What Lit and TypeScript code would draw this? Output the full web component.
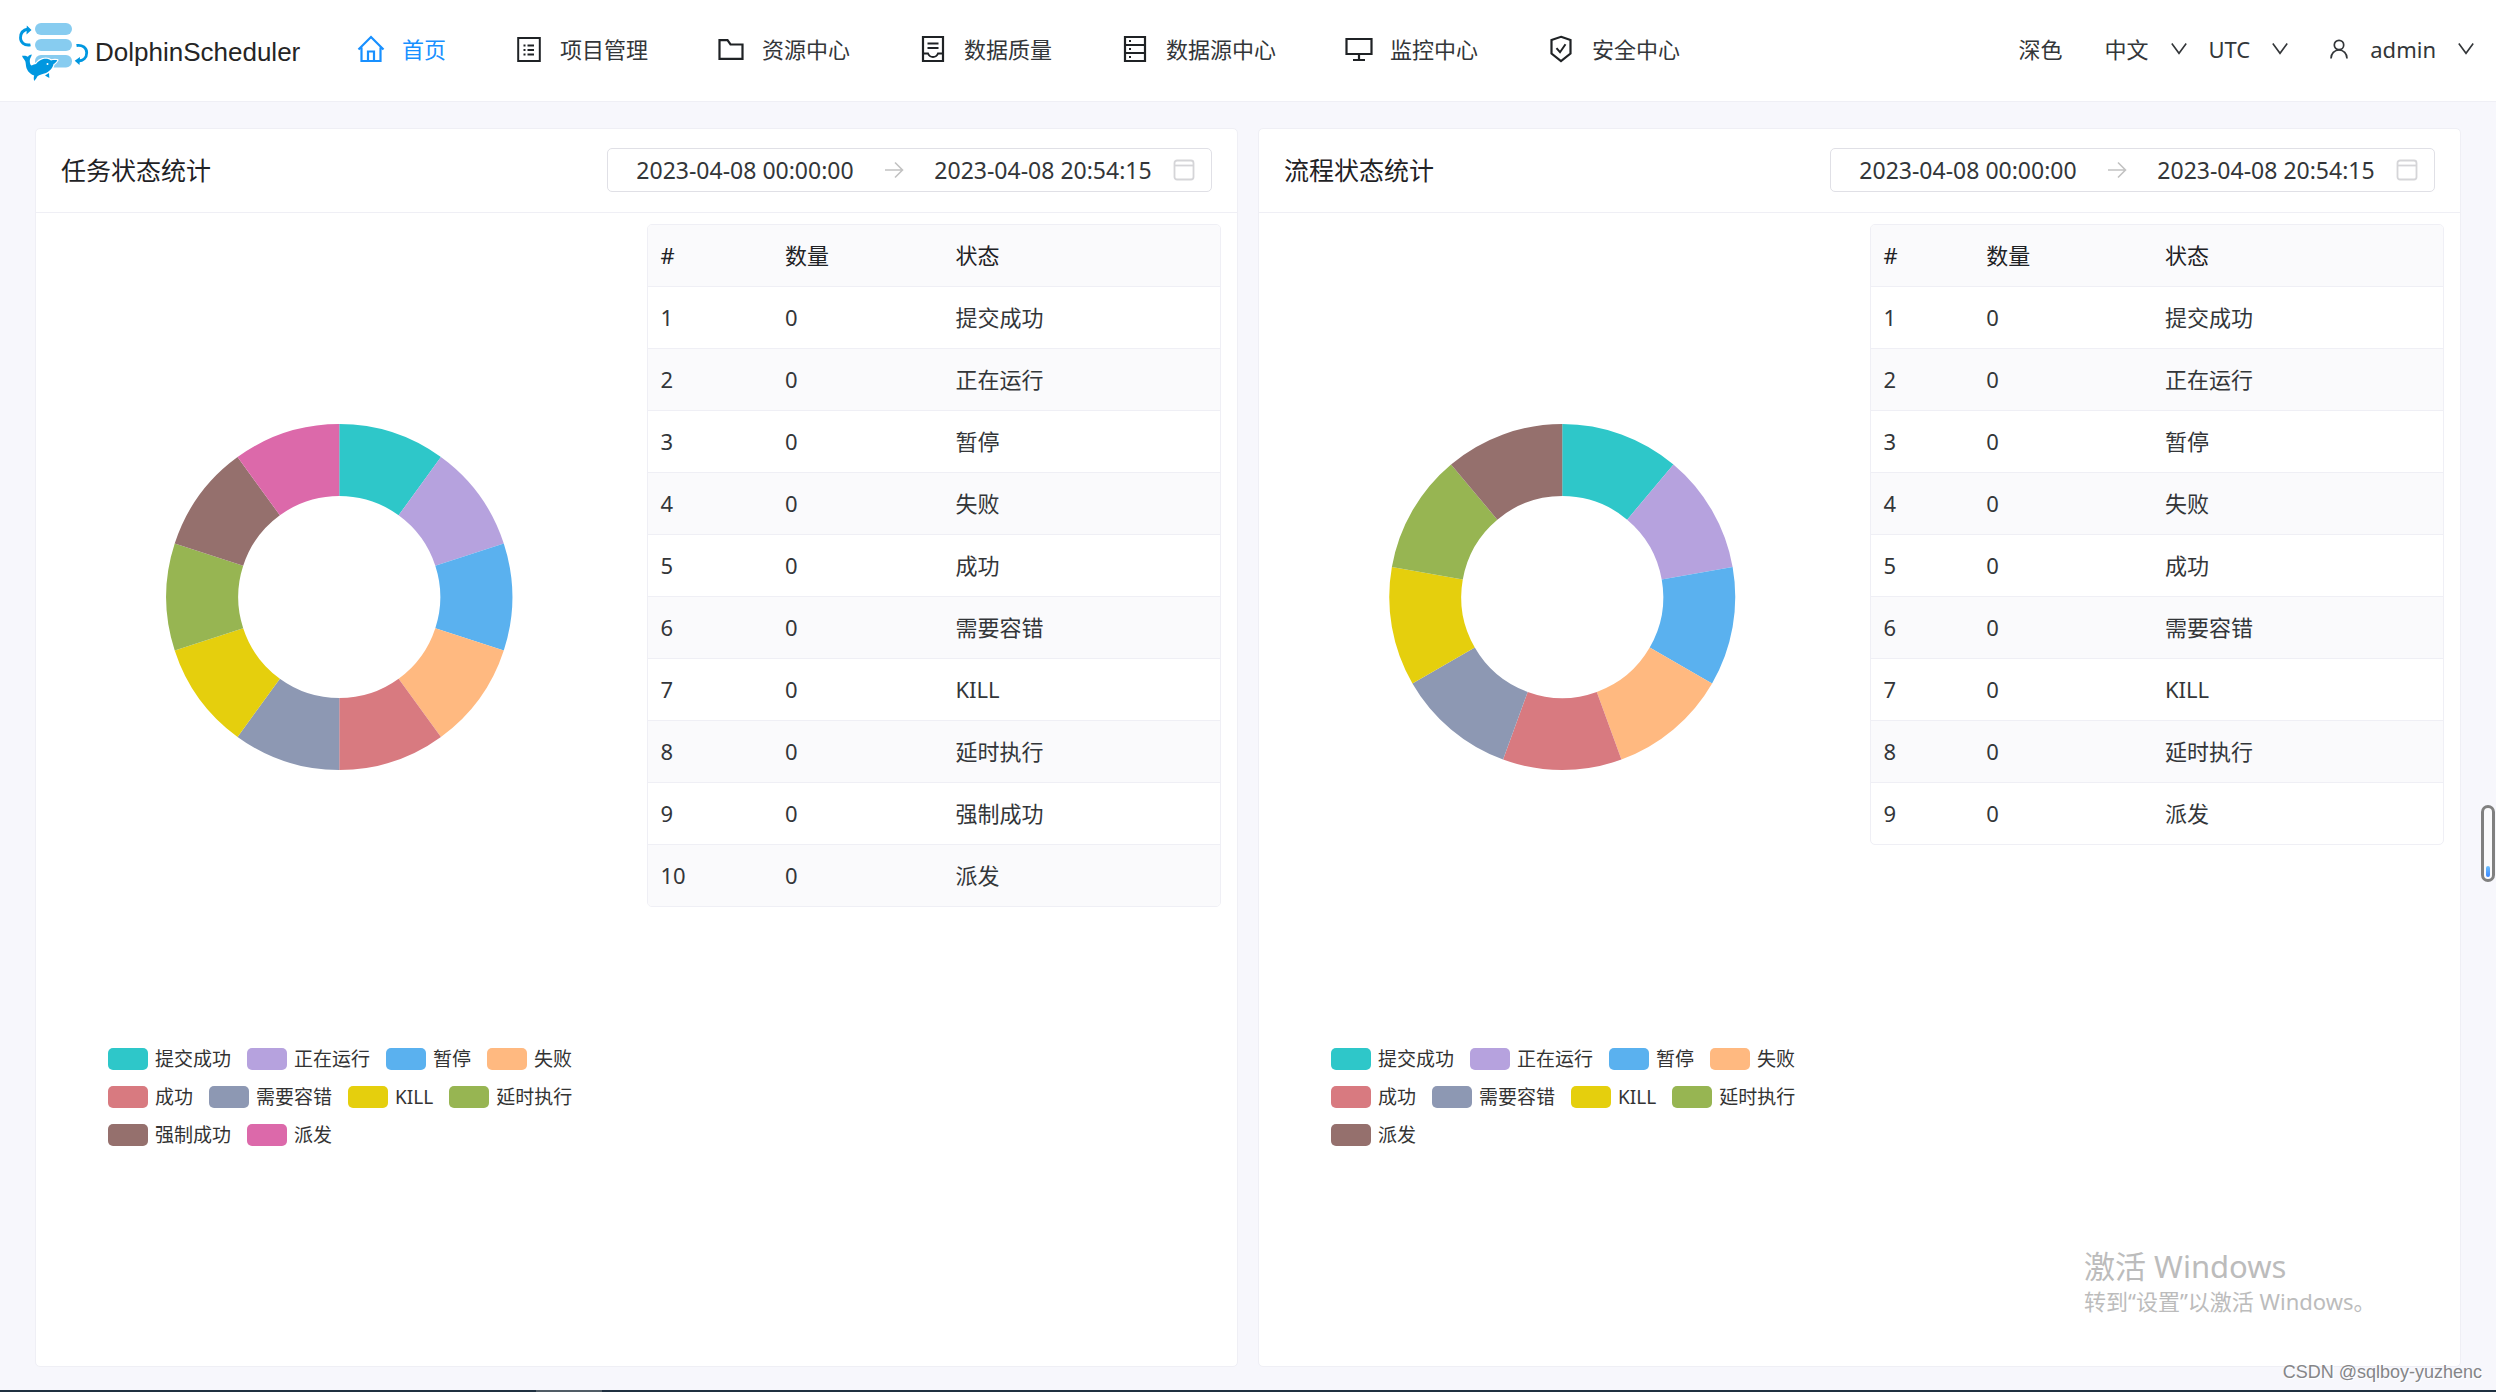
import { LitElement, html, css, svg } from "lit";
import { customElement, property } from "lit/decorators.js";

const base = css`
  * { box-sizing: border-box; }
  button, input { font: inherit; color: inherit; background: none; border: 0; padding: 0; margin: 0; }
  button { cursor: pointer; }
  svg { display: block; flex: none; }
`;

const COLORS = ["#2ec7c9", "#b6a2de", "#5ab1ef", "#ffb980", "#d87a80", "#8d98b3", "#e5cf0d", "#97b552", "#95706d", "#dc69aa"];

interface NavItem { label: string; icon: unknown; }

const NAV: NavItem[] = [
  { label: "首页", icon: svg`<path d="M2.5 15.500 15 3l12.500 12.500M5.500 13.500v13.500h19V13.500M12 27v-9.500h6V27"/>` },
  { label: "项目管理", icon: svg`<path d="M3 4h24v23H3z" transform="translate(1.500 0) scale(.9 1)"/><path d="M9.500 11.500h2M9.500 16h2M9.500 20.500h2M13.500 11.500h6.500M13.500 16h6.500M13.500 20.500h6.500" stroke-width="2"/>` },
  { label: "资源中心", icon: svg`<path d="M3.500 6.200h8l3 4.300h12v14.300h-23z"/>` },
  { label: "数据质量", icon: svg`<path d="M5 3h20v24H5z"/><path d="M9.500 9.500h11M9.500 14h11" stroke-width="2"/><path d="M5 19.500h5c1 2.500 2.500 3.500 5 3.500s4-1 5-3.500h5" stroke-width="2"/>` },
  { label: "数据源中心", icon: svg`<path d="M5 3h20v24H5zM5 11h20M5 19h20"/><path d="M9 7h2M9 15h2M9 23h2" stroke-width="2"/>` },
  { label: "监控中心", icon: svg`<path d="M2.500 5h25v15h-25zM15 20v5M9 26h12"/>` },
  { label: "安全中心", icon: svg`<path d="M15 2.800 24.500 6v13.500L15 27 5.500 19.500V6z"/><path d="m10.500 14.200 3.500 4 5.500-8" stroke-width="2"/>` },
];

const chevron = html`<svg width="16" height="16" viewBox="0 0 16 16" fill="none" stroke="currentColor" stroke-width="1.6" aria-hidden="true"><path d="M.8 2.500 8 12.300 15.200 2.500"/></svg>`;

@customElement("top-bar")
class TopBar extends LitElement {
  static styles = [base, css`
    :host { display: block; }
    .bar { display: flex; align-items: center; height: 102px; padding: 0 22px 0 18px; background: #fff; border-bottom: 1px solid #efeff5; color: #333639; }
    .logo { display: flex; align-items: center; width: 338px; padding-top: 2px; color: #252525; font-family: "Liberation Sans", sans-serif; font-size: 26px; gap: 5px; text-decoration: none; }
    .nav { display: flex; gap: 68px; margin-bottom: 3px; }
    .link { display: flex; align-items: center; gap: 16px; color: inherit; text-decoration: none; white-space: nowrap; }
    .link svg { color: #1f2225; }
    .link.active, .link.active svg { color: #1890ff; }
    .tools { display: flex; align-items: center; margin: 0 0 3px auto; white-space: nowrap; }
    .tool { display: flex; align-items: center; gap: 22px; margin-left: 22px; }
    .tool.far { margin-left: 42px; }
  `];
  render() {
    return html`<header class="bar">
      <a class="logo" href="#home">
        <svg width="72" height="60" viewBox="18 21 72 60" aria-hidden="true">
          <g fill="#87ccf0">
            <rect x="35" y="22" width="37" height="12" rx="6"/>
            <rect x="35" y="38" width="37" height="12" rx="6"/>
            <rect x="35" y="54" width="37" height="12.500" rx="6"/>
          </g>
          <g fill="none" stroke="#0097e0" stroke-width="2.800">
            <path d="M30.500 43.800C24 45 20.500 41 20.500 36.800c0-5.500 3-8 7.500-8.800"/>
            <path d="M76.500 44.500c6-1 10.200 2.500 10.200 7.300 0 5-3.500 7.900-8.500 8.200"/>
          </g>
          <path fill="#0097e0" d="M26.800 24.500 31.500 29l-5 4.500zM80 56l-5.300 3.800L79.500 64z"/>
          <path fill="#0097e0" stroke="#fff" stroke-width="2.400" stroke-linejoin="round" paint-order="stroke" d="M22 54.800c2.600-.4 4.600 0 6 1 .8-1.300 2-2 3.800-2.200-.3 2.200-1.600 3.400-2 5.400-.2 3 .6 5 1.700 5.600 1.800-1 3.200-1.400 4.500-1.600 2-2.600 4.200-4.200 6.500-4.800 3.500-.8 6.500-.3 8.500 1.200 2.300-.4 4.300-.4 6.300-.2-.9 1.700-2.300 3-3.800 3.900-.6 3.900-3.600 7.200-7.500 8.900-3.500 1.200-6.500 1.700-8.500 3.200-1 1.800-1.800 3.200-3.300 4.700-.6-2-.6-3.700 0-5.400-4-1.200-7-4.500-8-8.500-.5-2.500-.3-4-1-6-1-2-2.600-2.800-3.200-5.200z"/>
          <path fill="#0097e0" d="m45 74.500 4-2.500.3 5z"/>
          <circle cx="47.500" cy="63" r="1" fill="#fff"/>
        </svg>
        <span>DolphinScheduler</span>
      </a>
      <nav class="nav">
        ${NAV.map((n, i) => html`<a class="link ${i === 0 ? "active" : ""}" href="#nav-${i}">
          <svg width="30" height="30" viewBox="0 0 30 30" fill="none" stroke="currentColor" stroke-width="2.200" aria-hidden="true">${n.icon}</svg>
          <span>${n.label}</span></a>`)}
      </nav>
      <div class="tools">
        <button class="tool">深色</button>
        <button class="tool far">中文 ${chevron}</button>
        <button class="tool">UTC ${chevron}</button>
        <button class="tool far">
          <svg width="18" height="20" viewBox="0 0 18 20" fill="none" stroke="currentColor" stroke-width="1.700" aria-hidden="true"><circle cx="9" cy="6" r="4.700"/><path d="M1 19.500c0-5 3.500-8.500 8-8.500s8 3.500 8 8.500"/></svg>
          admin ${chevron}
        </button>
      </div>
    </header>`;
  }
}

@customElement("date-range")
class DateRange extends LitElement {
  static styles = [base, css`
    :host { display: block; width: 605px; max-width: 100%; }
    .box { display: flex; align-items: center; height: 44px; padding: 0 16px 0 12px; border: 1px solid #e0e0e6; border-radius: 5px; background: #fff; font-size: 23px; color: #333639; }
    input { flex: 1; min-width: 0; width: 0; height: 40px; text-align: center; outline: none; }
    .arrow { margin: 0 14px; color: #c2c2c2; }
    .cal { display: flex; margin-left: 5px; color: #d5d5d8; }
  `];
  render() {
    return html`<div class="box">
      <input type="text" aria-label="开始时间" .value=${"2023-04-08 00:00:00"}>
      <svg class="arrow" width="20" height="20" viewBox="0 0 20 20" fill="none" stroke="currentColor" stroke-width="1.600" aria-hidden="true"><path d="M1 10h17M11 2.500 18.500 10 11 17.500"/></svg>
      <input type="text" aria-label="结束时间" .value=${"2023-04-08 20:54:15"}>
      <button class="cal" aria-label="选择日期"><svg width="22" height="22" viewBox="0 0 22 22" fill="none" stroke="currentColor" stroke-width="1.800" aria-hidden="true"><rect x="1.500" y="1.500" width="19" height="19" rx="2.500"/><path d="M1.500 6.500h19"/></svg></button>
    </div>`;
  }
}

@customElement("status-card")
class StatusCard extends LitElement {
  @property() heading = "";
  @property({ attribute: false }) states: string[] = [];

  static styles = [base, css`
    :host { display: flex; min-width: 0; }
    .card { flex: 1; min-width: 0; background: #fff; border: 1px solid #efeff5; border-radius: 5px; }
    .head { display: flex; align-items: center; justify-content: space-between; gap: 20px; padding: 19px 25px 20px; border-bottom: 1px solid #efeff5; }
    .title { margin: 0; font-size: 25px; line-height: 40px; font-weight: 400; color: #1f2225; white-space: nowrap; }
    .body { display: grid; grid-template-columns: 1fr 1fr; align-items: start; gap: 20px; padding: 11px 16px; }
    .chart { display: flex; flex-direction: column; }
    .pie { width: 100%; height: 746px; }
    .legend { display: flex; flex-wrap: wrap; gap: 8px 16px; width: 480px; margin: 74px 0 0 56px; padding: 0; list-style: none; font-size: 19px; line-height: 30px; color: #333; }
    .item { display: flex; align-items: center; gap: 7px; }
    .swatch { width: 40px; height: 22px; border-radius: 5px; }
    table { width: 100%; border: 1px solid #efeff5; border-radius: 5px; border-spacing: 0; overflow: hidden; color: #333639; }
    th, td { height: 62px; padding: 0 13px 2px; text-align: left; font-weight: 400; line-height: 30px; border-bottom: 1px solid #efeff5; white-space: nowrap; }
    th { color: #1f2225; background: #fafafc; }
    tbody tr:nth-child(even) td { background: #fafafc; }
    tbody tr:last-child td { height: 61px; border-bottom: 0; }
  `];

  private slice(i: number, n: number) {
    const R = 173, r = 101;
    const a = (i / n) * 2 * Math.PI, b = ((i + 1) / n) * 2 * Math.PI;
    const p = (rad: number, t: number) => `${(rad * Math.sin(t)).toFixed(2)} ${(-rad * Math.cos(t)).toFixed(2)}`;
    return svg`<path fill=${COLORS[i]} d="M${p(R, a)}A${R} ${R} 0 0 1 ${p(R, b)}L${p(r, b)}A${r} ${r} 0 0 0 ${p(r, a)}Z"/>`;
  }

  render() {
    const n = this.states.length;
    return html`<section class="card">
      <div class="head"><h2 class="title">${this.heading}</h2><date-range></date-range></div>
      <div class="body">
        <div class="chart">
          <svg class="pie" viewBox="-287 -373 574 746" role="img" aria-label=${this.heading}>${this.states.map((_, i) => this.slice(i, n))}</svg>
          <ul class="legend">
            ${this.states.map((s, i) => html`<li class="item"><span class="swatch" style="background:${COLORS[i]}"></span>${s}</li>`)}
          </ul>
        </div>
        <table>
          <thead><tr><th>#</th><th>数量</th><th>状态</th></tr></thead>
          <tbody>${this.states.map((s, i) => html`<tr><td>${i + 1}</td><td>0</td><td>${s}</td></tr>`)}</tbody>
        </table>
      </div>
    </section>`;
  }
}

@customElement("app-root")
class AppRoot extends LitElement {
  static styles = [base, css`
    :host { display: flex; flex-direction: column; position: relative; min-height: 100vh; box-sizing: border-box; overflow: hidden; background: #f7f7fc; font-family: "Noto Sans", "Noto Sans CJK SC", sans-serif; font-size: 22px; line-height: 30px; color: #333639; }
    .main { flex: 1; display: grid; grid-template-columns: 1fr 1fr; gap: 20px; padding: 26px 35px 23px; }
    .edge { display: flex; height: 2px; padding-left: 536px; background: #1f3040; }
    .tab { width: 66px; background: #505c66; }
    .activate { position: absolute; right: 120px; bottom: 76px; width: 292px; color: #bcbcbc; white-space: nowrap; pointer-events: none; }
    .activate p { margin: 0; }
    .activate .big { font-size: 31px; line-height: 40px; }
    .credit { position: absolute; right: 14px; bottom: 8px; font-family: "Liberation Sans", sans-serif; font-size: 18px; line-height: 24px; color: #858588; text-shadow: 1px 1px 0 #fff; }
    .pill { position: absolute; right: 1px; top: 805px; width: 14px; height: 77px; padding: 0 2px 2px; display: flex; align-items: flex-end; border: 3px solid #808080; border-radius: 7px; background: #fafafc; }
    .level { width: 100%; height: 11px; border-radius: 3px; background: linear-gradient(#6cc0ff, #3a86ff); }
  `];
  render() {
    return html`
      <top-bar></top-bar>
      <main class="main">
        <status-card heading="任务状态统计" .states=${["提交成功", "正在运行", "暂停", "失败", "成功", "需要容错", "KILL", "延时执行", "强制成功", "派发"]}></status-card>
        <status-card heading="流程状态统计" .states=${["提交成功", "正在运行", "暂停", "失败", "成功", "需要容错", "KILL", "延时执行", "派发"]}></status-card>
      </main>
      <div class="edge"><span class="tab"></span></div>
      <div class="activate"><p class="big">激活 Windows</p><p>转到“设置”以激活 Windows。</p></div>
      <div class="credit">CSDN @sqlboy-yuzhenc</div>
      <div class="pill"><span class="level"></span></div>
    `;
  }
}
